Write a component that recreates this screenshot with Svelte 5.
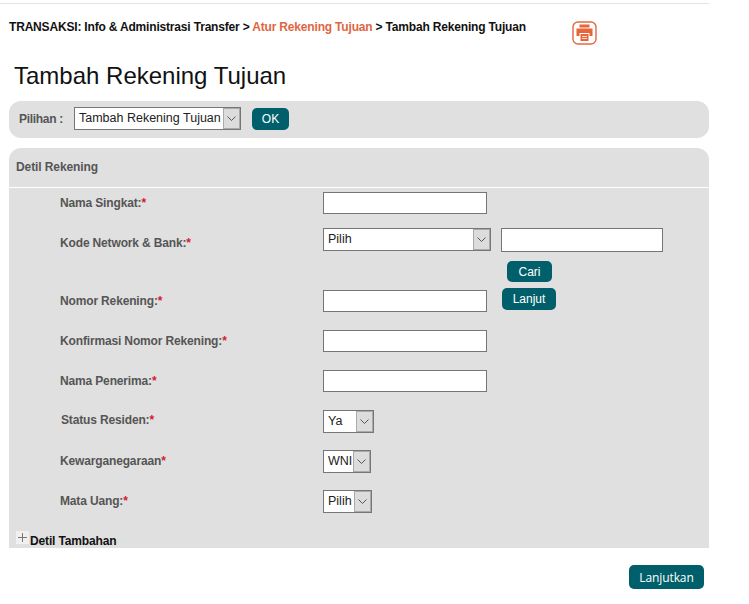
<script>
  const rows = [
    { label: 'Nama Singkat:', first: true },
    { label: 'Kode Network & Bank:', bank: true },
    { label: 'Nomor Rekening:', next: true },
    { label: 'Konfirmasi Nomor Rekening:' },
    { label: 'Nama Penerima:' },
    { label: 'Status Residen:', cls: 'nudge', select: 'Ya', width: 51 },
    { label: 'Kewarganegaraan', select: 'WNI', width: 48 },
    { label: 'Mata Uang:', select: 'Pilih', width: 49 }
  ];
</script>

{#snippet dropdown(text, width)}
  <span class="select" style="width: {width}px">
    <select aria-label={text}><option>{text}</option></select>
    <span class="arrow">
      <svg width="9" height="5" viewBox="0 0 9 5"><path d="M0.5 0.5 L4.5 4.5 L8.5 0.5" fill="none" stroke="#555" /></svg>
    </span>
  </span>
{/snippet}

<div class="page">
  <div class="crumbs">
    <p>TRANSAKSI: Info &amp; Administrasi Transfer &gt; <a href="#top">Atur Rekening Tujuan</a> &gt; Tambah Rekening Tujuan</p>
    <svg class="print" width="25" height="24" viewBox="0 0 25 24">
      <rect x="1" y="1" width="23" height="22" rx="5" fill="#fff" stroke="#e2693f" stroke-width="1.4" />
      <path d="M7.5 3.5h10v3h-10z M4.5 7.5h16v7.5h-3v-3h-10v3h-3z M8.5 13h8v7h-8z" fill="#e8653a" />
      <path d="M10 15.5h5M10 17.5h5" stroke="#fff" stroke-width="0.8" />
    </svg>
  </div>

  <h1>Tambah Rekening Tujuan</h1>

  <div class="bar">
    <span class="bar-label">Pilihan :</span>
    {@render dropdown('Tambah Rekening Tujuan', 167)}
    <button class="btn ok">OK</button>
  </div>

  <section class="panel">
    <h2>Detil Rekening</h2>
    <div class="form">
      {#each rows as row}
        <div class="row" class:bank={row.bank} class:first={row.first}>
          <span class="label" class:nudge={row.cls}>{row.label}<b>*</b></span>
          {#if row.bank}
            <div class="bank-field">
              <div class="bank-top">
                {@render dropdown('Pilih', 168)}
                <input class="wide" type="text" />
              </div>
              <button class="btn cari">Cari</button>
            </div>
          {:else if row.select}
            {@render dropdown(row.select, row.width)}
          {:else}
            <input type="text" />
            {#if row.next}<button class="btn lanjut">Lanjut</button>{/if}
          {/if}
        </div>
      {/each}
    </div>
    <div class="more">
      <span class="plus">
        <svg width="9" height="9" viewBox="0 0 9 9"><path d="M4.5 0v9M0 4.5h9" stroke="#777" /></svg>
      </span>
      <span>Detil Tambahan</span>
    </div>
  </section>

  <div class="actions">
    <button class="btn next">Lanjutkan</button>
  </div>
</div>

<style>
  :global(body) {
    margin: 0;
    background: #fff;
  }

  .page {
    width: 700px;
    margin-left: 9px;
    padding-top: 3px;
    font-family: "Liberation Sans", Arial, sans-serif;
    font-size: 12px;
  }

  .crumbs {
    position: relative;
    display: flex;
    height: 42px;
    margin-left: -9px;
    padding-left: 9px;
    border-top: 1px solid #e2e2e2;
  }

  .crumbs p {
    margin: 16px 0 0;
    height: 14px;
    line-height: 14px;
    font-weight: bold;
    letter-spacing: -0.18px;
    color: #111;
  }

  .crumbs a {
    color: #e0663f;
    text-decoration: none;
  }

  .print {
    position: absolute;
    left: 572px;
    top: 17px;
  }

  h1 {
    margin: 0 0 10px 5px;
    height: 45px;
    padding-top: 6px;
    box-sizing: border-box;
    font-size: 24px;
    line-height: 48px;
    font-weight: normal;
    color: #111;
  }

  .bar {
    display: flex;
    align-items: center;
    height: 37px;
    box-sizing: border-box;
    padding: 0 0 2px 10px;
    border-radius: 12px;
    background: #e0e0e0;
  }

  .bar-label {
    width: 55px;
    font-weight: bold;
    letter-spacing: -0.3px;
    color: #555;
  }

  .panel {
    margin-top: 10px;
    height: 400px;
    border-radius: 12px 12px 0 0;
    background: #e0e0e0;
  }

  h2 {
    margin: 0;
    box-sizing: border-box;
    padding: 12px 0 0 7px;
    border-bottom: 1px solid #fff;
    height: 40px;
    font-size: 12px;
    line-height: 14px;
    letter-spacing: -0.1px;
    color: #555;
  }

  .form {
    padding: 4px 0 0 51px;
  }

  .row {
    display: flex;
    height: 22px;
    margin-bottom: 18px;
  }

  .row.first {
    margin-bottom: 14px;
  }

  .row.bank {
    height: 54px;
    margin-bottom: 8px;
  }

  .label {
    width: 263px;
    flex: none;
    font-weight: bold;
    line-height: 22px;
    letter-spacing: -0.15px;
    color: #555;
  }

  .row.bank .label {
    padding-top: 4px;
  }

  .label b {
    color: #d8192e;
  }

  .label.nudge {
    padding-left: 1px;
    width: 262px;
    line-height: 20px;
  }

  input {
    width: 164px;
    height: 22px;
    box-sizing: border-box;
    margin: 0;
    border: 1px solid #767676;
    background: #fff;
  }

  input.wide {
    width: 162px;
    height: 24px;
    margin-left: 10px;
  }

  .bank-top {
    display: flex;
  }

  .select {
    position: relative;
    display: inline-block;
    flex: none;
    height: 23px;
  }

  select {
    appearance: none;
    display: block;
    width: 100%;
    height: 100%;
    margin: 0;
    padding: 0 0 2px 4px;
    border: 1px solid #767676;
    border-radius: 0;
    background: #fff;
    font-family: inherit;
    font-size: 12.5px;
    color: #222;
  }

  .arrow {
    position: absolute;
    top: 1px;
    right: 1px;
    bottom: 1px;
    width: 17px;
    display: flex;
    align-items: center;
    justify-content: center;
    box-sizing: border-box;
    border: 1px solid #aaa;
    background: #dcdcdc;
  }

  .btn {
    margin: 0;
    padding: 0;
    border: 0;
    border-radius: 5px;
    background: #005f6b;
    color: #fff;
    font-family: inherit;
    font-size: 12px;
  }

  .ok {
    width: 37px;
    height: 22px;
    margin-left: 11px;
  }

  .cari {
    display: block;
    width: 45px;
    height: 21px;
    margin: 9px 0 0 184px;
  }

  .lanjut {
    width: 54px;
    height: 22px;
    margin: -2px 0 0 15px;
  }

  .more {
    display: flex;
    align-items: flex-start;
    padding: 2px 0 0 7px;
    font-weight: bold;
    letter-spacing: -0.15px;
    color: #111;
  }

  .plus {
    display: flex;
    align-items: center;
    justify-content: center;
    width: 13px;
    height: 13px;
    margin: -1px 1px 0 0;
    background: #f0f0f0;
  }

  .more span:last-child {
    line-height: 14px;
    margin-top: 2px;
  }

  .actions {
    display: flex;
    justify-content: flex-end;
    padding: 17px 5px 0 0;
  }

  .next {
    width: 75px;
    height: 24px;
    font-family: "Open Sans", sans-serif;
    letter-spacing: -0.1px;
  }
</style>
